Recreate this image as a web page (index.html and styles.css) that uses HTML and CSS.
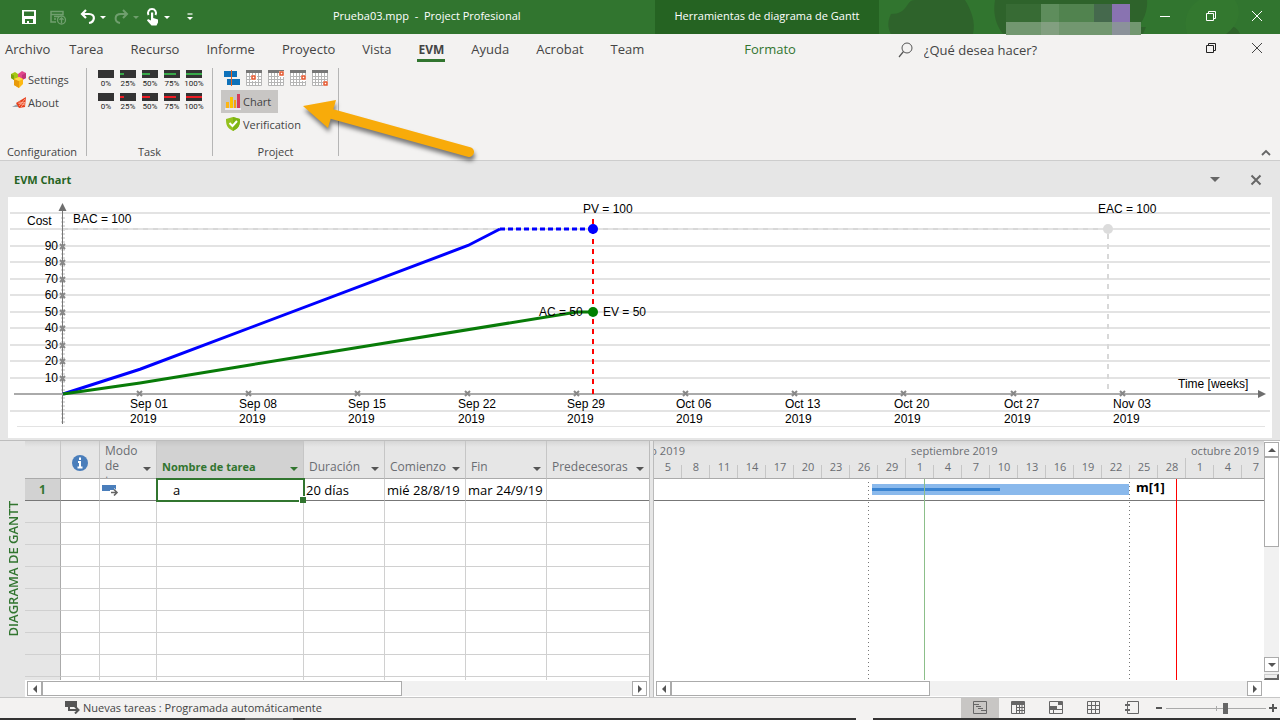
FILE: index.html
```html
<!DOCTYPE html>
<html lang="es">

<head>
    <meta charset="UTF-8">
    <meta name="viewport" content="width=device-width, initial-scale=1.0">
    <title>Prueba03.mpp - Project Profesional</title>
    <link rel="stylesheet" href="styles.css">
</head>

<body>
    <header class="titlebar">
        <div class="quick-access">
            <button aria-label="Guardar"><svg width="16" height="16"><path d="M1 1h14v14H1zM3 2.500v4.500h10v-4.500zM4 10v4h2v-2h2v2h4v-4z" fill="#fff" fill-rule="evenodd" /></svg></button>
            <button aria-label="Publicar" class="faded"><svg width="17" height="16"><path d="M1 2.500h12v3H1zM1 5v8h5M4 7.500h5M4 10h2M13 4v2" fill="none" stroke="#fff" stroke-width="1.500" /><circle cx="11.500" cy="11" r="4" fill="none" stroke="#fff" stroke-width="1.300" /><path d="M11.500 14V9M9.500 10.800l2-2 2 2" fill="none" stroke="#fff" stroke-width="1.300" /></svg></button>
            <button aria-label="Deshacer"><svg width="16" height="16"><path d="M6 1L2 5l4 4M2 5h7c7 0 6 8 0 9" fill="none" stroke="#fff" stroke-width="2.200" /></svg></button>
            <button aria-label="Opciones de deshacer" class="drop"></button>
            <button aria-label="Rehacer" class="faded redo"><svg width="16" height="16"><path d="M10 1l4 4-4 4M14 5H8C1 5 1 13 7 14" fill="none" stroke="#fff" stroke-width="2" /></svg></button>
            <button aria-label="Opciones de rehacer" class="drop faded"></button>
            <button aria-label="Modo táctil" class="touch"><svg width="14" height="18"><path d="M2.500 7a4 4 0 1 1 7 0" fill="none" stroke="#fff" stroke-width="2" /><path d="M5 4.500h2.200V10l4.800 1.500v3L10.500 17.500H5.500L1 12.500 2 11l3 1.500z" fill="#fff" /></svg></button>
            <button aria-label="Opciones del modo táctil" class="drop"></button>
            <button aria-label="Personalizar" class="customize"><svg width="8" height="8"><path d="M1.500 1h5" stroke="#fff" stroke-width="1.200" /><path d="M1 4h6L4 7z" fill="#fff" /></svg></button>
        </div>
        <div class="document-name">Prueba03.mpp&nbsp; -&nbsp; Project Profesional</div>
        <div class="tools-name">Herramientas de diagrama de Gantt</div>
        <div class="window-area">
            <svg class="title-art" width="401" height="35">
                <g fill="#2e632b">
                    <path d="M12 14c18 0 14-14 24-14h50c6 10 11 22 8 34H12c-4-7-3-14 0-20z" />
                    <path d="M116 0h152c1 10-3 20-9 27h8l-3 7H124c-8-10-10-22-8-34z" />
                    <path d="M340 34c2-9 16-12 21 0z" />
                </g>
                <path d="M320 0h36c8 12 3 25-9 34h-39c-4-15 0-26 12-34z" fill="#33782f" />
                <g class="account">
                    <path d="M127 4h35v18h-35z" fill="#376b34" />
                    <path d="M162 4h18v18h-18z" fill="#5e8d5c" />
                    <path d="M180 4h35v18h-35z" fill="#51834f" />
                    <path d="M215 4h18v18h-18z" fill="#45694d" />
                    <path d="M233 4h18v18h-18z" fill="#8973b1" />
                    <path d="M127 22h135v13H127z" fill="#729770" />
                    <path d="M162 22h18v13h-18z" fill="#829f80" />
                    <path d="M233 22h18v13h-18z" fill="#8b929a" />
                </g>
            </svg>
            <button aria-label="Minimizar"><svg width="12" height="12"><path d="M1 6.500h10" stroke="#fff" /></svg></button>
            <button aria-label="Restaurar"><svg width="12" height="12"><path d="M1.500 3.500h7v7h-7zM3.500 3V1.500h7v7H9" fill="none" stroke="#fff" /></svg></button>
            <button aria-label="Cerrar"><svg width="12" height="12"><path d="M1 1l10 10M11 1L1 11" stroke="#fff" /></svg></button>
        </div>
    </header>

    <nav class="tabs">
        <a href="#" class="tab file">Archivo</a>
        <a href="#" class="tab">Tarea</a>
        <a href="#" class="tab">Recurso</a>
        <a href="#" class="tab">Informe</a>
        <a href="#" class="tab">Proyecto</a>
        <a href="#" class="tab">Vista</a>
        <a href="#" class="tab active">EVM</a>
        <a href="#" class="tab">Ayuda</a>
        <a href="#" class="tab">Acrobat</a>
        <a href="#" class="tab">Team</a>
        <a href="#" class="tab format">Formato</a>
        <label class="search">
            <svg width="16" height="16"><circle cx="9" cy="6" r="5" fill="none" stroke="#555" /><path d="M5.500 9.500L1 15" stroke="#555" stroke-width="1.200" /></svg>
            <input type="text" placeholder="¿Qué desea hacer?" aria-label="¿Qué desea hacer?">
        </label>
        <div class="document-buttons">
            <button aria-label="Restaurar documento"><svg width="12" height="12"><path d="M1.500 3.500h7v7h-7zM3.500 3V1.500h7v7H9" fill="none" stroke="#222" /></svg></button>
            <button aria-label="Cerrar documento"><svg width="12" height="12"><path d="M1 1l10 10M11 1L1 11" stroke="#444" /></svg></button>
        </div>
    </nav>

    <section class="ribbon">
        <div class="group configuration">
            <div class="group-body">
                <button class="command"><svg width="17" height="17"><path d="M1 3l4-2 3 2v4L4 9 1 7z" fill="#a5c813" /><path d="M1 3l3 1.500V9L1 7z" fill="#7fa30d" /><path d="M8 3l4-3 4 2v5l-4 2-4-2z" fill="#e0488c" /><path d="M12 4l4-2v5l-4 2z" fill="#c13477" /><path d="M4 8l5-2 4 2v5l-4 4-5-3z" fill="#fdb913" /><path d="M4 8l5 2v7l-5-3z" fill="#e89b0c" /><path d="M4 8l5-2 4 2-4 2z" fill="#ffd94a" /></svg>Settings</button>
                <button class="command"><svg width="17" height="17"><path d="M2 13l7-4 2 4z" fill="#9aa5ad" /><path d="M6 9l10-6-1 10-6 1z" fill="#e8401c" /><path d="M8 9l7 2M9 8l6 1M9 12l6-7M11 13l4-5" stroke="#ffc4ae" stroke-width=".7" /></svg>About</button>
            </div>
            <div class="group-name">Configuration</div>
        </div>
        <div class="group task">
            <div class="group-body">
                <div class="percent-row" id="green-row"></div>
                <div class="percent-row" id="red-row"></div>
            </div>
            <div class="group-name">Task</div>
        </div>
        <div class="group project">
            <div class="group-body">
                <div class="date-row" id="date-row">
                    <button aria-label="Status date"><svg width="16" height="16"><path d="M0 1h13v6H0zM3 9h13v6H3z" fill="#0f72ba" /><path d="M7.500 0v16" stroke="#e8601c" /></svg></button>
                </div>
                <button class="command pressed"><svg width="17" height="17"><path d="M0 15h16v2H0z" fill="#e9e9ee" /><path d="M1 9h3v6H1z" fill="#fdb515" /><path d="M5 4h3v11H5z" fill="#fcc400" /><path d="M9 7h2v8H9z" fill="#f5a112" /><path d="M12 1h3v14h-3z" fill="#d43b5c" /></svg>Chart</button>
                <button class="command"><svg width="17" height="17"><path d="M8 1l7 2c0 6-1 9-7 12C2 12 1 9 1 3z" fill="#94c11f" /><path d="M8 1l7 2c0 6-1 9-7 12z" fill="#7eb514" /><path d="M4.500 7l3 3L12 5" fill="none" stroke="#fff" stroke-width="2" /></svg>Verification</button>
            </div>
            <div class="group-name">Project</div>
        </div>
        <svg class="pointer" width="190" height="70"><path d="M32 22l137 38" stroke="#f8ab0a" stroke-width="10" stroke-linecap="round" /><path d="M3 14l33-6-8 28z" fill="#f8ab0a" /></svg>
        <button class="collapse" aria-label="Contraer la cinta"><svg width="10" height="8"><path d="M1 6l4-4 4 4" fill="none" stroke="#666" stroke-width="1.800" /></svg></button>
    </section>

    <section class="evm-panel">
        <div class="panel-header">
            <h1 class="panel-title">EVM Chart</h1>
            <button aria-label="Opciones del panel"><svg width="10" height="6"><path d="M0 0h10L5 5z" fill="#666" /></svg></button>
            <button aria-label="Cerrar panel"><svg width="12" height="12"><path d="M1.500 1.500l9 9M10.500 1.500l-9 9" stroke="#666" stroke-width="2" /></svg></button>
        </div>
        <svg class="chart" id="chart" viewBox="0 0 1264 241"></svg>
    </section>

    <main class="workspace">
        <div class="view-name"><span>DIAGRAMA DE GANTT</span></div>
        <div class="pane sheet">
            <div class="pane-body">
                <table class="task-table">
                    <colgroup>
                        <col class="col-number">
                        <col class="col-info">
                        <col class="col-mode">
                        <col class="col-name">
                        <col class="col-date">
                        <col class="col-date">
                        <col class="col-date">
                        <col>
                    </colgroup>
                    <thead>
                        <tr>
                            <th></th>
                            <th class="info"><svg width="16" height="16"><circle cx="8" cy="8" r="8" fill="#4a7ebb" /><path d="M8 2.500v2.500M6 7h2v5M5.500 12.500h5" fill="none" stroke="#fff" stroke-width="2" /></svg></th>
                            <th class="mode"><div class="head"><span>Modo de tarea</span><i class="arrow"></i></div></th>
                            <th class="current"><div class="head"><span>Nombre de tarea</span><i class="arrow"></i></div></th>
                            <th><div class="head"><span>Duración</span><i class="arrow"></i></div></th>
                            <th><div class="head"><span>Comienzo</span><i class="arrow"></i></div></th>
                            <th><div class="head"><span>Fin</span><i class="arrow"></i></div></th>
                            <th><div class="head"><span>Predecesoras</span><i class="arrow"></i></div></th>
                        </tr>
                    </thead>
                    <tbody id="task-rows">
                        <tr class="selected">
                            <td>1</td>
                            <td></td>
                            <td class="mode-cell"><svg width="17" height="12"><path d="M0 1h14v6H0z" fill="#4a7ebb" /><path d="M8 6h4v-2l5 4.500-5 4v-2H8z" fill="#fff" /><path d="M9 8.500h6M12 5.500l3 3-3 3" fill="none" stroke="#666" stroke-width="1.600" /></svg></td>
                            <td class="active-cell">a</td>
                            <td>20 días</td>
                            <td>mié 28/8/19</td>
                            <td>mar 24/9/19</td>
                            <td></td>
                        </tr>
                    </tbody>
                </table>
            </div>
            <div class="scrollbar">
                <button class="scroll-button" aria-label="Desplazar a la izquierda"><svg width="6" height="8"><path d="M5 0v8L1 4z" fill="#555" /></svg></button>
                <div class="track"><div class="thumb sheet-thumb"></div></div>
                <button class="scroll-button" aria-label="Desplazar a la derecha"><svg width="6" height="8"><path d="M1 0v8l4-4z" fill="#555" /></svg></button>
            </div>
        </div>
        <div class="splitter"></div>
        <div class="pane gantt">
            <div class="timescale">
                <div class="months">
                    <div class="month august"><span>agosto 2019</span></div>
                    <div class="month september">septiembre 2019</div>
                    <div class="month october">octubre 2019</div>
                </div>
                <div class="days" id="days"></div>
            </div>
            <svg class="bars">
                <path d="M0 21.500h2000" stroke="#777" />
                <path d="M214.500 3v400M475.500 3v400" stroke="#777" stroke-dasharray="1 3" />
                <rect x="218" y="5" width="257" height="11" fill="#8ab9ec" />
                <rect x="218" y="9" width="128" height="3" fill="#3b85d2" />
                <path d="M270.500 0v400" stroke="#8cbf8a" />
                <path d="M522.500 0v400" stroke="#f00" />
                <text x="482" y="13">m[1]</text>
            </svg>
            <div class="scrollbar">
                <button class="scroll-button" aria-label="Fechas anteriores"><svg width="6" height="8"><path d="M5 0v8L1 4z" fill="#555" /></svg></button>
                <div class="track"><div class="thumb gantt-thumb"></div></div>
                <button class="scroll-button" aria-label="Fechas posteriores"><svg width="6" height="8"><path d="M1 0v8l4-4z" fill="#555" /></svg></button>
            </div>
        </div>
        <div class="scrollbar vertical">
            <button class="scroll-button" aria-label="Desplazar hacia arriba"><svg width="8" height="6"><path d="M0 5h8L4 1z" fill="#555" /></svg></button>
            <div class="track"><div class="thumb row-thumb"></div></div>
            <button class="scroll-button" aria-label="Desplazar hacia abajo"><svg width="8" height="6"><path d="M0 1h8L4 5z" fill="#555" /></svg></button>
            <div class="split-handle"></div>
        </div>
    </main>

    <footer class="statusbar">
        <button class="new-tasks"><svg width="16" height="14"><path d="M0 1h12v6H0z" fill="#555" /><path d="M6 8h6v-2l4 4-4 4v-2H6z" fill="#f3f2f1" /><path d="M4 6v4h9M10 6.500l3.500 3.500-3.500 3.500" fill="none" stroke="#555" stroke-width="2" /></svg>Nuevas tareas : Programada automáticamente</button>
        <div class="views">
            <button class="view on" aria-label="Diagrama de Gantt"><svg width="14" height="14"><path d="M.5.500h13v12H.5zM1 3.500h5M3 5.500h5M5 7.500h5M8 9.500h5" fill="none" stroke="#666" /></svg></button>
            <button class="view" aria-label="Uso de tareas"><svg width="14" height="14"><path d="M.5.500h13v12H.5zM5.500 4v8M8.500 4v8M11 4v8M5 6.500h8M5 9.500h8" fill="none" stroke="#666" /><path d="M1 1h12v3H1z" fill="#666" /></svg></button>
            <button class="view" aria-label="Organizador de equipo"><svg width="14" height="14"><path d="M.5.500h13v12H.5zM1 8.500h12M4.500 9v4" fill="none" stroke="#666" /><path d="M9 1h4v3H9zM1 5h7v3H1z" fill="#666" /></svg></button>
            <button class="view" aria-label="Hoja de recursos"><svg width="14" height="14"><path d="M.5.500h12v12H.5zM4.500 1v12M8.500 1v12M1 4.500h12M1 8.500h12" fill="none" stroke="#666" /></svg></button>
            <button class="view" aria-label="Informe"><svg width="14" height="14"><path d="M2.500.500h11v12h-11z" fill="none" stroke="#666" /><path d="M0 4h5M0 9h5" stroke="#666" stroke-width="2" /></svg></button>
        </div>
        <div class="zoom">
            <button aria-label="Alejar"><svg width="8" height="8"><path d="M1 4h6" stroke="#555" stroke-width="2" /></svg></button>
            <input type="range" min="0" max="100" value="60" aria-label="Zoom">
            <button aria-label="Acercar"><svg width="8" height="8"><path d="M0 4h8M4 0v8" stroke="#555" stroke-width="2" /></svg></button>
        </div>
    </footer>
    <div class="taskbar"><i class="running"></i><i class="window-gap"></i></div>

    <script>
        const percents = [0, 25, 50, 75, 100];
        const calendarMarks = [[6, 6], [12, 2], [12, 6], [12, 12]];
        const chartDates = ["Sep 01", "Sep 08", "Sep 15", "Sep 22", "Sep 29", "Oct 06", "Oct 13", "Oct 20", "Oct 27", "Nov 03"];
        const scaleDays = [5, 8, 11, 14, 17, 20, 23, 26, 29, 1, 4, 7, 10, 13, 16, 19, 22, 25, 28, 1, 4, 7];

        function fillPercents(id, color) {
            document.getElementById(id).innerHTML = percents.map(p => `
                <button class="percent">
                    <svg width="16" height="8"><rect width="16" height="8" fill="#333" /><rect y="3" width="${p * 0.16}" height="2" fill="${color}" /></svg>
                    <span>${p}%</span>
                </button>`).join('');
        }

        function fillCalendars() {
            document.getElementById('date-row').innerHTML += calendarMarks.map(([x, y]) => `
                <button aria-label="Date filter">
                    <svg width="16" height="16">
                        <path d="M.5 3v12.500h15V3M3.500 3v12M6.500 3v12M9.500 3v12M12.500 3v12M1 6.500h14M1 9.500h14M1 12.500h14" fill="#fff" stroke="#b5b5b5" />
                        <path d="M0 0h16v3H0z" fill="#777" />
                        <rect x="${x - 1}" y="${y - 1}" width="6" height="6" fill="#fff" />
                        <rect x="${x}" y="${y}" width="3" height="3" fill="#fff" stroke="#e4572e" stroke-width="1.500" />
                    </svg>
                </button>`).join('');
        }

        function valueY(value) {
            return 197 - value * 1.65;
        }

        function tick(x, y) {
            return `<path class="tick" d="M${x - 2} ${y - 2}l5 5M${x + 3} ${y - 2}l-5 5" />`;
        }

        function drawChart() {
            let out = '';
            for (let v = -10; v <= 110; v += 10) {
                const y = Math.round(valueY(v));
                if (v !== 0) out += `<path class="grid" d="M2 ${y}h1260" />`;
            }
            out += `<path class="grid thin" d="M9 229.500h1248" />
                <path class="forecast" d="M55 32h1045v165" />
                <path class="axis-shade" d="M55 20v207" />
                <path class="axis" d="M54.500 12v215" />
                <path d="M50.500 14h8l-4-8z" fill="#777" />
                <path class="time-axis" d="M6 197h1246" />
                <path d="M1250 193v8l8-4z" fill="#666" />`;
            for (let v = 10; v < 100; v += 10) {
                const y = Math.round(valueY(v));
                out += tick(54, y) + `<text x="50" y="${y + 4}" text-anchor="end">${v}</text>`;
            }
            chartDates.forEach((date, i) => {
                const x = Math.round(132 + i * 109.2);
                out += tick(x - 1, 196) + `<text x="${x - 10}" y="211">${date}</text><text x="${x - 10}" y="226">2019</text>`;
            });
            out += `<path class="status-date" d="M585 22v175" />
                <path class="planned" d="M55 197L132 ${valueY(15)} 460 ${valueY(90)} 492 32" />
                <path class="planned dashed" d="M492 32h93" />
                <path class="earned" d="M55 197L132 186 242 168 569 115H585" />
                <circle cx="585" cy="32" r="5" fill="#00f" />
                <circle cx="585" cy="115" r="5" fill="green" />
                <circle cx="1100" cy="32" r="5" fill="#dcdcdc" />
                <text x="19" y="28">Cost</text>
                <text x="65" y="26">BAC = 100</text>
                <text x="575" y="16">PV = 100</text>
                <text x="531" y="119">AC = 50</text>
                <text x="595" y="119">EV = 50</text>
                <text x="1090" y="16">EAC = 100</text>
                <text x="1170" y="191">Time [weeks]</text>`;
            document.getElementById('chart').innerHTML = out;
        }

        fillPercents('green-row', '#39a94a');
        fillPercents('red-row', '#ed1c24');
        fillCalendars();
        drawChart();
        document.getElementById('days').innerHTML = scaleDays.map(d => `<span>${d}</span>`).join('');
        document.getElementById('task-rows').innerHTML += `<tr>${'<td></td>'.repeat(8)}</tr>`.repeat(9);
    </script>
</body>

</html>
```
FILE: styles.css
```css
* {
    box-sizing: border-box;
}

body {
    font-family: "Open Sans", "Noto Sans", sans-serif;
    font-size: 12px;
    color: #444;
    background: #f3f2f1;
    margin: 0;
    height: 100vh;
    display: flex;
    flex-direction: column;
    overflow: hidden;
}

button {
    font: inherit;
    color: inherit;
    background: none;
    border: 0;
    padding: 0;
    display: flex;
    align-items: center;
    justify-content: center;
}

svg {
    display: block;
    flex: none;
}

.titlebar {
    height: 34px;
    flex: none;
    display: flex;
    background: #31752f;
    color: #fff;
    font-size: 11px;
}

.quick-access {
    width: 333px;
    padding-left: 21px;
    display: flex;
    align-items: center;
    gap: 13px;
}

.quick-access .drop {
    width: 5px;
    margin-left: -9px;
}

.drop::before {
    content: "";
    border: 3px solid transparent;
    border-top-color: #fff;
    border-bottom: 0;
}

.faded {
    opacity: 0.3;
}

.quick-access .redo,
.quick-access .touch {
    margin-left: -5px;
}

.quick-access .customize {
    margin-left: 4px;
}

.document-name {
    width: 322px;
    line-height: 32px;
}

.tools-name {
    width: 224px;
    line-height: 32px;
    text-align: center;
    background: #256322;
}

.window-area {
    flex: 1;
    position: relative;
    display: flex;
    justify-content: flex-end;
    padding-right: 17px;
    gap: 34px;
}

.window-area button {
    position: relative;
    height: 32px;
}

.title-art {
    position: absolute;
    left: 0;
    top: 0;
}

.tabs {
    height: 31px;
    flex: none;
    display: flex;
    gap: 1px;
    font-size: 13px;
}

.tab {
    color: #444;
    text-decoration: none;
    line-height: 31px;
    padding: 0 13px;
}

.tab.file {
    padding: 0 5px;
}

.tab.active {
    font-weight: bold;
    font-size: 12px;
    background: linear-gradient(#31752f, #31752f) center bottom 3px / 28px 3px no-repeat;
}

.tab.format {
    margin-left: 73px;
    color: #31752f;
}

.search {
    display: flex;
    align-items: center;
    margin-left: 88px;
    gap: 10px;
}

.search input {
    width: 160px;
    padding: 0;
    border: 0;
    background: none;
    font: inherit;
}

.search input::placeholder {
    color: #444;
    opacity: 1;
}

.document-buttons {
    margin-left: auto;
    padding: 0 17px 3px 0;
    display: flex;
    gap: 34px;
}

.ribbon {
    height: 96px;
    flex: none;
    padding: 3px 0 4px;
    display: flex;
    position: relative;
    border-bottom: 1px solid #cdcdcd;
    font-size: 11px;
}

.group {
    display: flex;
    flex-direction: column;
    border-right: 1px solid #b5b5b5;
}

.configuration {
    width: 87px;
    padding-left: 6px;
}

.task,
.project {
    width: 126px;
    padding-left: 8px;
}

.group-body {
    flex: 1;
}

.group-name {
    text-align: center;
    line-height: 8px;
    margin-left: -8px;
}

.command {
    height: 23px;
    padding: 0 7px 0 4px;
    gap: 1px;
}

.pressed {
    background: #c8c6c4;
}

.percent-row {
    display: flex;
    height: 23px;
    padding-left: 3px;
}

.percent {
    width: 16px;
    margin-right: 6px;
    flex-direction: column;
    justify-content: flex-start;
    padding-top: 2px;
    font-family: Roboto, sans-serif;
    font-size: 8px;
    line-height: 11px;
    color: #222;
}

.date-row {
    display: flex;
    align-items: flex-start;
    height: 22px;
    gap: 6px;
    padding: 2px 0 0 3px;
}

.pointer {
    position: absolute;
    left: 300px;
    top: 27px;
    filter: drop-shadow(1px 4px 2px rgba(0, 0, 0, 0.5));
}

.collapse {
    position: absolute;
    right: 9px;
    bottom: 3px;
}

.evm-panel {
    flex: none;
    background: #e6e6e6;
    padding: 0 8px 2px;
    border-bottom: 1px solid #bdbdbd;
}

.panel-header {
    height: 36px;
    padding: 2px 10px 0 6px;
    display: flex;
    gap: 30px;
}

.panel-title {
    flex: 1;
    margin: 0;
    font-size: 11px;
    line-height: 34px;
    color: #256322;
}

.chart {
    width: 100%;
    background: #fff;
    font-family: "Liberation Sans", Arial, sans-serif;
    font-size: 12px;
}

.chart path {
    fill: none;
}

.chart path[fill] {
    fill: #6e6e6e;
}

.grid {
    stroke: #e3e3e3;
    stroke-width: 2;
}

.grid.thin {
    stroke-width: 1;
}

.tick {
    stroke: #888;
    stroke-width: 2;
}

.axis {
    stroke: #777;
}

.axis-shade {
    stroke: #ddd;
    stroke-width: 4;
    stroke-dasharray: 2 2;
}

.time-axis {
    stroke: #aaa;
    stroke-width: 2;
}

.forecast {
    stroke: #d8d8d8;
    stroke-width: 2;
    stroke-dasharray: 5 5;
}

.status-date {
    stroke: #f00;
    stroke-width: 2;
    stroke-dasharray: 5 5;
}

.planned {
    stroke: #00f;
    stroke-width: 3;
}

.planned.dashed {
    stroke-dasharray: 5 3;
}

.earned {
    stroke: #087b08;
    stroke-width: 3;
}

.workspace {
    flex: 1;
    min-height: 0;
    display: grid;
    grid-template-columns: 25px 624px 5px 1fr 16px;
    grid-template-rows: 100%;
    background: #fff;
    border-bottom: 1px solid #c6c6c6;
}

.view-name {
    background: #e6e6e6;
    color: #31752f;
    font-size: 13px;
    font-weight: 600;
    display: flex;
    align-items: center;
    justify-content: center;
}

.view-name span {
    writing-mode: vertical-rl;
    transform: rotate(180deg);
}

.pane {
    min-width: 0;
    display: flex;
    flex-direction: column;
    overflow: hidden;
}

.pane-body {
    flex: 1;
    min-height: 0;
    overflow: hidden;
}

.task-table {
    width: 100%;
    table-layout: fixed;
    border-spacing: 0;
    color: #000;
}

.col-number {
    width: 36px;
}

.col-info {
    width: 39px;
}

.col-mode {
    width: 57px;
}

.col-name {
    width: 147px;
}

.col-date {
    width: 81px;
}

.task-table th {
    height: 38px;
    padding: 0;
    background: linear-gradient(#d6d6d6, #e6e6e6 6px);
    border-right: 1px solid #c6c6c6;
    border-bottom: 1px solid #aaa;
    color: #6a6d72;
    font-weight: normal;
    text-align: left;
}

.task-table th.current {
    background: linear-gradient(#c6c6c6, #d2d2d2 6px);
    color: #31752f;
    font-size: 11px;
    font-weight: bold;
}

.task-table th:last-child,
.task-table td:last-child {
    border-right: 0;
}

.info svg {
    margin: 6px auto 0;
}

.head {
    height: 37px;
    padding: 0 5px 3px;
    display: flex;
    align-items: flex-end;
    justify-content: space-between;
    overflow: hidden;
    line-height: 16px;
}

.mode .head {
    align-items: flex-start;
    padding-top: 2px;
    line-height: 15px;
}

.arrow {
    border: 4px solid transparent;
    border-top-color: #555;
    border-bottom: 0;
    margin-bottom: 4px;
}

.mode .arrow {
    align-self: flex-end;
}

.mode .head span {
    width: 34px;
}

.current .arrow {
    border-top-color: #31752f;
}

.task-table td {
    height: 22px;
    padding: 0 2px;
    font-size: 13px;
    line-height: 20px;
    border-right: 1px solid #d0d0d0;
    border-bottom: 1px solid #d0d0d0;
    white-space: nowrap;
}

.task-table td:first-child {
    background: #e6e6e6;
    border-right-color: #aaa;
    text-align: center;
    font-size: 12px;
}

.task-table .selected td {
    border-bottom-color: #777;
}

.task-table .selected td:first-child {
    background: #d2d2d2;
    color: #31752f;
    font-weight: bold;
}

.task-table td.active-cell {
    position: relative;
    padding-left: 16px;
    outline: 2px solid #31752f;
    outline-offset: -1px;
}

.active-cell::after {
    content: "";
    position: absolute;
    right: -3px;
    bottom: -3px;
    width: 6px;
    height: 6px;
    background: #31752f;
    border: 1px solid #fff;
    border-width: 1px 0 0 1px;
}

.splitter {
    background: #e6e6e6;
    border: 1px solid #bbb;
    border-width: 0 1px;
}

.timescale {
    height: 38px;
    flex: none;
    background: linear-gradient(#d6d6d6, #e6e6e6 6px);
    border-bottom: 1px solid #aaa;
    color: #6a6d72;
    font-size: 11px;
    white-space: nowrap;
}

.months {
    display: flex;
    height: 17px;
}

.month {
    line-height: 20px;
    height: 17px;
    flex: none;
}

.august {
    width: 252px;
}

.august span {
    display: flex;
    justify-content: flex-end;
    width: 31px;
}

.september {
    width: 280px;
    padding-left: 5px;
}

.october {
    padding-left: 5px;
}

.days {
    display: flex;
    overflow: hidden;
}

.days span {
    flex: 0 0 28px;
    height: 20px;
    line-height: 18px;
    text-align: center;
    background: linear-gradient(#c6c6c6, #c6c6c6) right bottom / 1px 13px no-repeat;
}

/* month boundaries run up into the month row */
.days span:nth-child(10n + 9) {
    background-size: 1px 20px;
}

.september,
.october {
    background: linear-gradient(#c6c6c6, #c6c6c6) -1px 0 / 1px 11px no-repeat;
}

.bars {
    width: 100%;
    flex: 1 1 0;
    min-height: 0;
}

.bars text {
    font-size: 13px;
    font-weight: bold;
}

.scrollbar {
    height: 15px;
    flex: none;
    margin: 1px 2px;
    display: flex;
    background: #f1f1f1;
}

.scroll-button {
    width: 15px;
    height: 15px;
    flex: none;
    background: #fff;
    border: 1px solid #ababab;
}

.track {
    flex: 1;
}

.thumb {
    height: 15px;
    background: #fff;
    border: 1px solid #ababab;
}

.sheet-thumb {
    width: 61%;
}

.gantt-thumb {
    width: 45%;
}

.vertical {
    width: 15px;
    height: auto;
    margin: 1px 1px 17px 0;
    flex-direction: column;
}

.row-thumb {
    height: 45%;
}

.split-handle {
    height: 6px;
    margin-top: 2px;
    background: #eee;
    border: 1px solid #ccc;
    border-width: 1px 2px 2px 1px;
    border-right-color: #666;
    border-bottom-color: #666;
}

.statusbar {
    height: 20px;
    flex: none;
    display: flex;
    font-size: 11px;
}

.new-tasks {
    margin-left: 65px;
    padding-bottom: 2px;
    gap: 2px;
}

.views {
    margin-left: auto;
    display: flex;
}

.view {
    width: 38px;
}

.view.on {
    background: #c8c6c4;
}

.zoom {
    display: flex;
    align-items: center;
    gap: 3px;
    padding: 0 3px 0 4px;
}

.zoom input {
    width: 100px;
    height: 14px;
    margin: 0;
    appearance: none;
    background: linear-gradient(#aaa, #aaa) 50% 50% / 1px 5px no-repeat, linear-gradient(#aaa, #aaa) center / 100% 1px no-repeat;
}

.zoom input::-webkit-slider-thumb {
    appearance: none;
    width: 5px;
    height: 11px;
    background: #666;
}

.taskbar {
    height: 2px;
    flex: none;
    display: flex;
    background: #333;
}

.running {
    width: 48px;
    margin-left: 245px;
    background: #666;
}

.window-gap {
    width: 17px;
    margin-left: 563px;
    background: #f3f2f1;
}
```
